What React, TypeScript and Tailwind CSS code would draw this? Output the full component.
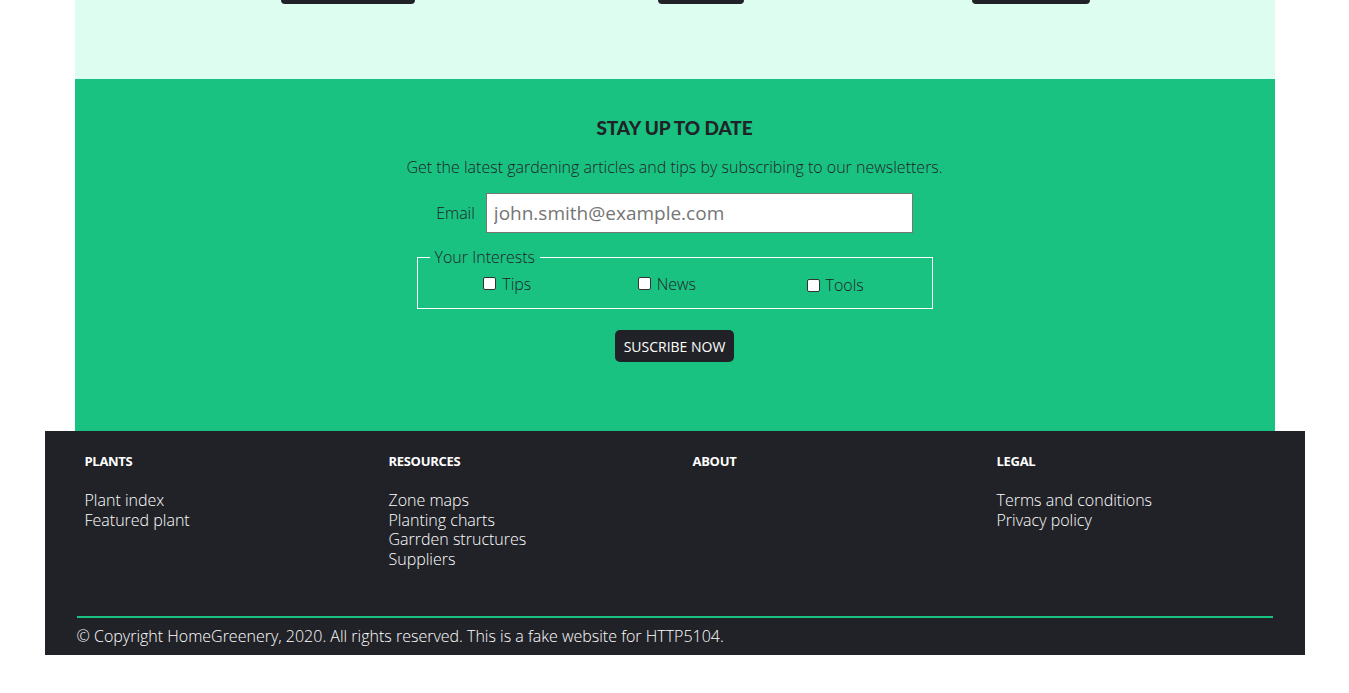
import { useState } from "react";

const font = { fontFamily: "'Open Sans', 'Liberation Sans', sans-serif" };

const footerCols = [
  { title: "Plants", links: ["Plant index", "Featured plant"] },
  {
    title: "Resources",
    links: ["Zone maps", "Planting charts", "Garrden structures", "Suppliers"],
  },
  { title: "About", links: [] },
  { title: "Legal", links: ["Terms and conditions", "Privacy policy"] },
];

function Interest({ label, className }: { label: string; className?: string }) {
  return (
    <label className={"flex items-center gap-[6px] " + (className ?? "")}>
      <input
        type="checkbox"
        className="appearance-none w-[13px] h-[13px] m-0 bg-white border border-[#333] rounded-[2px]"
      />
      <span>{label}</span>
    </label>
  );
}

export default function App() {
  const [email, setEmail] = useState("");

  return (
    <div className="w-full min-h-[693px] bg-white font-light text-[#212227]" style={font}>
      {/* end of previous section */}
      <div className="mx-auto w-[1200px] h-[79px] bg-[#dcfdf0] flex items-start">
        <div className="ml-[206px] w-[134px] h-[4px] bg-[#212227] rounded-b-[5px]" />
        <div className="ml-[243px] w-[86px] h-[4px] bg-[#212227] rounded-b-[5px]" />
        <div className="ml-[228px] w-[118px] h-[4px] bg-[#212227] rounded-b-[5px]" />
      </div>

      {/* newsletter */}
      <section className="mx-auto w-[1200px] h-[352px] bg-[#1ac281] flex flex-col items-center pt-[38px]">
        <h2
          className="text-[19px] leading-[22px] font-black tracking-[-0.1px]"
          style={{ fontFamily: "Lato, 'Liberation Sans', sans-serif" }}
        >
          STAY UP TO DATE
        </h2>
        <p className="mt-[17px] text-[16px] leading-[22px]">
          Get the latest gardening articles and tips by subscribing to our newsletters.
        </p>
        <div className="mt-[15px] flex items-center">
          <label className="text-[16px] mr-[11px]">Email</label>
          <input
            type="email"
            value={email}
            onChange={(e) => setEmail(e.target.value)}
            placeholder="john.smith@example.com"
            className="w-[427px] h-[40px] bg-white border border-[#767676] px-[7px] text-[19px] font-normal placeholder:text-[#757575] outline-none"
          />
        </div>
        <fieldset className="mt-[14px] w-[516px] border border-white px-[12px] pb-[12px] pt-[2px]">
          <legend className="px-[5px] ml-[0px] text-[16px] leading-[20px]">Your Interests</legend>
          <div className="flex justify-around text-[16px] leading-[22px] mt-[2px]">
            <Interest label="Tips" className="-ml-[2px]" />
            <Interest label="News" className="-ml-[5px]" />
            <Interest label="Tools" className="mt-[3px] -ml-[1px]" />
          </div>
        </fieldset>
        <button className="mt-[21px] h-[32px] px-[9px] bg-[#212227] text-white text-[14px] font-normal rounded-[5px]">
          SUSCRIBE NOW
        </button>
      </section>

      {/* footer */}
      <footer className="mx-auto w-[1260px] h-[224px] bg-[#212227] text-white flex flex-col">
        <div className="flex pl-[40px] pt-[21px]">
          {footerCols.map((col) => (
            <div key={col.title} className="w-[304px]">
              <h3 className="text-[13px] leading-[18px] font-bold uppercase tracking-[-0.3px]">
                {col.title}
              </h3>
              <ul className="mt-[21px] text-[16px] leading-[19.5px]">
                {col.links.map((link) => (
                  <li key={link}>
                    <a href="#">{link}</a>
                  </li>
                ))}
              </ul>
            </div>
          ))}
        </div>
        <div className="mt-auto mx-[32px] pb-[8px]">
          <div className="h-[2px] bg-[#1ac281]" />
          <p className="mt-[7px] text-[16px] leading-[22px]">
            © Copyright HomeGreenery, 2020. All rights reserved. This is a fake website for HTTP5104.
          </p>
        </div>
      </footer>
    </div>
  );
}
